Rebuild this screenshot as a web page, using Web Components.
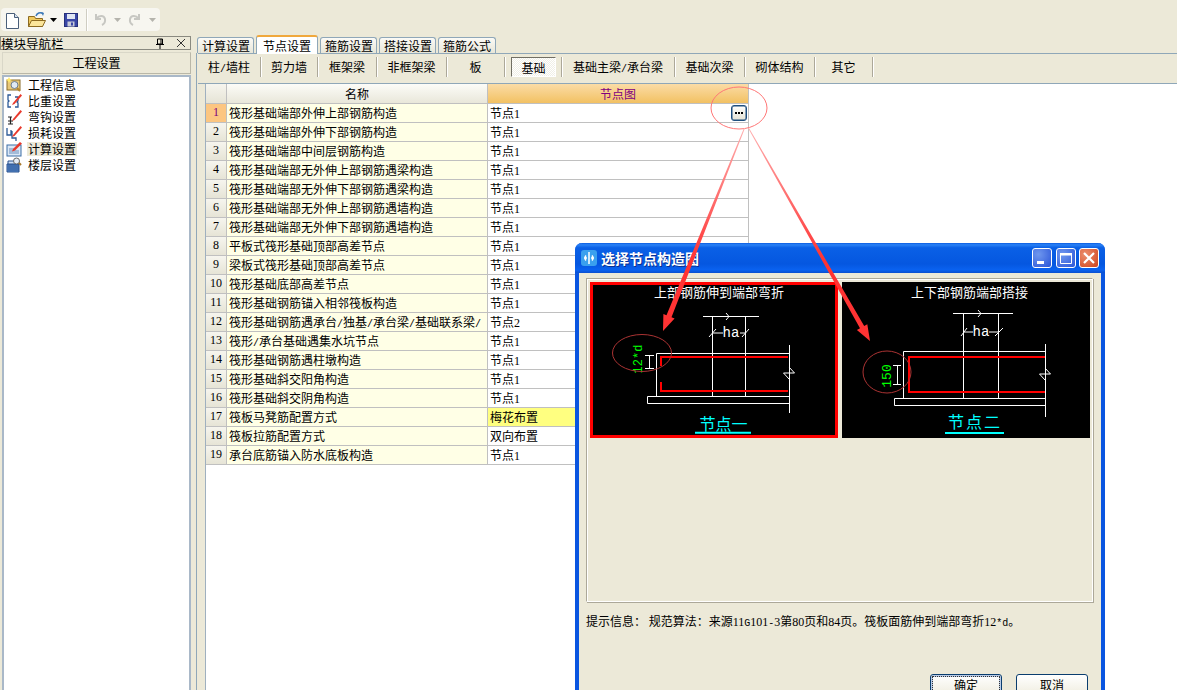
<!DOCTYPE html>
<html lang="zh"><head><meta charset="utf-8"><title>节点设置</title>
<style>
html,body{margin:0;height:690px;overflow:hidden;background:#ece9d8;font:12px "Noto Sans CJK SC",sans-serif;color:#000}
.app{height:690px;display:flex;flex-direction:column;position:relative;overflow:hidden}
.main{flex:1;display:flex;min-height:0}
</style></head><body>
<div class="app">
<gld-toolbar></gld-toolbar>
<div class="main"><gld-nav></gld-nav><gld-work></gld-work></div>
<gld-dialog></gld-dialog>
<gld-callouts></gld-callouts>
</div>
<script>
const asc=s=>s.replace(/[\x21-\x7e]+/g,m=>m.replace(/[0-9]+|[^0-9]+/g,p=>/^[0-9]/.test(p)?`<span style="font:12px/12px 'Liberation Serif',serif">${p}</span>`:`<span style="font:10px/12px 'Liberation Mono',monospace">${p}</span>`));
const def=(n,css,html)=>customElements.define(n,class extends HTMLElement{constructor(){super();const r=this.attachShadow({mode:'open'});r.innerHTML=`<style>${css}</style>`+(typeof html==='function'?html(this):html);}});

def('gld-toolbar',`:host{display:block;height:35px;box-sizing:border-box;padding:8px 0 4px 1px}
.bar{width:159px;height:23px;background:#f7f6f0;border-radius:4px;display:flex;align-items:center;padding-left:4px;box-sizing:border-box}
svg{display:block;flex:none}`,`<div class="bar">
<svg width="16" height="18" viewBox="0 0 16 18"><path d="M1.500 2.500h8l4 4v11h-12z" fill="#fff" stroke="#4a5f7a"/><path d="M9.500 2.500v4h4" fill="#d5e1f0" stroke="#4a5f7a"/></svg>
<svg width="18" height="17" viewBox="0 0 18 17" style="margin-left:7px"><path d="M.5 5.500h6l1 2h7v8H.5z" fill="#f0c95d" stroke="#8c6a20"/><path d="M.5 15.500l3-6h14l-3 6z" fill="#fbe59a" stroke="#8c6a20"/><path d="M8 5c1-3 4-4 7-2.500" fill="none" stroke="#3b78b8" stroke-width="1.500"/><path d="M13 1l3 1-1 3z" fill="#3b78b8"/></svg>
<svg width="7" height="4" viewBox="0 0 7 4" style="margin-left:4px"><path d="M0 0h7L3.500 4z"/></svg>
<svg width="14" height="14" viewBox="0 0 14 14" style="margin-left:7px"><rect x=".5" y=".5" width="13" height="13" fill="#3a47a6" stroke="#26307a"/><rect x="3" y="1" width="8" height="5" fill="#dfe5f2"/><rect x="3.500" y="8.500" width="7" height="5" fill="#c8cbd8"/><rect x="7" y="9.500" width="2" height="3" fill="#3a47a6"/></svg>
<div style="width:1px;height:22px;background:#cfcdc2;margin:0 6px 0 8px;box-shadow:1px 0 #fff"></div>
<svg width="14" height="15" viewBox="0 0 14 15"><path d="M3 2v5h5M3.500 6.500C6 3 11 3 12 7c.5 3-1 5-3 6" fill="none" stroke="#c7c7c2" stroke-width="2"/></svg>
<svg width="7" height="4" viewBox="0 0 7 4" style="margin-left:7px"><path d="M0 0h7L3.500 4z" fill="#b5b4ad"/></svg>
<svg width="14" height="15" viewBox="0 0 14 15" style="margin-left:7px"><path d="M11 2v5H6M10.500 6.500C8 3 3 3 2 7c-.5 3 1 5 3 6" fill="none" stroke="#c7c7c2" stroke-width="2"/></svg>
<svg width="7" height="4" viewBox="0 0 7 4" style="margin-left:7px"><path d="M0 0h7L3.500 4z" fill="#b5b4ad"/></svg>
</div>`);

const pencil=`<path d="M7 10l7.500-9 1.500 1.500-7.500 8.500-2.500 1z" fill="#e8392c"/>`;
const navIcons=[
`<rect x="1" y="3" width="13" height="10" fill="#e8c878" stroke="#8a6d2a"/><path d="M3 0l1 2 2 1-2 1-1 2-1-2-2-1 2-1z" fill="#ffe96a"/><circle cx="8.500" cy="8" r="3.500" fill="#dfe9f4" stroke="#6b7c90"/><path d="M11 11l3 3" stroke="#b8862e" stroke-width="2"/>`,
`<path d="M5 2H2v5l1 1-1 1v5h3M9 4h3v4l-1 1 1 1v4H9" fill="none" stroke="#2c5a96" stroke-width="1.300"/>`+pencil,
`<path d="M2 15h5M4.500 15V8M2 8h4M2 12h5" fill="none" stroke="#222" stroke-width="1.200"/>`+pencil,
`<path d="M1 3v7h4V5M6 6v7h4v3" fill="none" stroke="#2c5a96" stroke-width="1.300"/>`+pencil,
`<rect x="1" y="4" width="14" height="11" fill="#dbe8f6" stroke="#3d6ea5"/><path d="M3 8h5M3 10h10M3 12h10" stroke="#6c8fbb"/><path d="M7 8l7-7 2 1.500-7 7-3 1z" fill="#e8392c"/>`,
`<path d="M1 7h12v8H1z" fill="#5d8fd0" stroke="#29518e"/><path d="M2 4h11v3H2zM2 9h11M2 11h11M2 13h11" fill="#cfe0f4" stroke="#29518e"/><circle cx="10.500" cy="4" r="3" fill="#e6edf5" stroke="#6a6a6a"/><path d="M13 6l2 2" stroke="#a97a2d" stroke-width="2"/>`];
const navNames=['工程信息','比重设置','弯钩设置','损耗设置','计算设置','楼层设置'];
def('gld-nav',`:host{display:flex;flex-direction:column;width:191px;flex:none;padding-top:1px;box-sizing:border-box}
.head{height:14px;box-sizing:border-box;border:1px solid #8a8a80;display:flex;align-items:center;font-size:12.500px;line-height:13px;white-space:nowrap}
.head span{flex:1}.head svg{display:block}
.btn{margin:2px 0 1px 2px;height:22px;border:1px solid;border-color:#d9d7c8 #b9b7a8 #b9b7a8 #d9d7c8;box-sizing:border-box;text-align:center;line-height:20px;font-size:12px;background:#ece9d8}
.list{flex:1;margin:0 0 0 2px;border:2px solid #a9b8c8;border-bottom:0;background:#fff;padding:0 0 0 2px}
.it{height:16px;display:flex;align-items:center;white-space:nowrap;line-height:14px}
.it svg{flex:none;width:16px;height:16px;margin-right:5px}
.it span{padding:0 1px}.it.sel span{background:#ece9d8}`,
`<div class="head"><span>模块导航栏</span>
<svg width="10" height="11" viewBox="0 0 10 11" style="margin-right:12px"><path d="M2.500 1h5v5h-5zM1 6.500h8M5 7v4M6 1v5" fill="none" stroke="#000"/></svg>
<svg width="8" height="8" viewBox="0 0 8 8" style="margin-right:5px"><path d="M0 0l8 8M8 0L0 8" stroke="#333"/></svg></div>
<div class="btn">工程设置</div>
<div class="list">${navNames.map((n,i)=>`<div class="it${i==4?' sel':''}"><svg viewBox="0 0 16 16">${navIcons[i]}</svg><span>${n}</span></div>`).join('')}</div>`);

def('gld-tabs',`:host{display:flex;height:18px;align-items:flex-end;padding-left:1px;position:relative;z-index:1}
.t{height:16px;padding:0 4px;box-sizing:border-box;border:1px solid #8fa7b8;border-bottom:0;border-radius:3px 3px 0 0;margin-right:2px;background:linear-gradient(#fbfaf6,#e8e6d8);line-height:15px;white-space:nowrap;width:57px;text-align:center}
.t.on{height:19px;width:62px;background:#fff;border-top:2px solid #f0a83c;line-height:17px;margin-bottom:-1px;border-color:#f0a83c #8fa7b8 #fff;font-size:12px}`,
`<div class="t">计算设置</div><div class="t on">节点设置</div><div class="t">箍筋设置</div><div class="t">搭接设置</div><div class="t" style="width:58px">箍筋公式</div>`);

const subs=[['柱/墙柱',63],['剪力墙',57],['框架梁',59],['非框架梁',70],['板',58],['基础',57,1],['基础主梁/承台梁',113],['基础次梁',70],['砌体结构',70],['其它',58]];
def('gld-subbar',`:host{display:flex;height:31px;box-sizing:border-box;border-top:1px solid #8fa7b8;border-bottom:1px solid #8fa7b8;padding-top:3px;align-items:flex-start;margin-left:1px}
.s{height:20px;box-sizing:border-box;border-right:1px solid #aca899;box-shadow:1px 0 #fff;text-align:center;line-height:20px;flex:none;white-space:nowrap;position:relative}
.s b{font-weight:400;position:absolute;left:6px;right:5px;top:0;height:20px;line-height:20px;border:1px solid;box-sizing:border-box;border-color:#716f64 #fff #fff #716f64;background:repeating-conic-gradient(#f0efe6 0 25%,#fff 0 50%) 0 0/2px 2px}`,
subs.map(s=>`<div class="s" style="width:${s[1]}px">${s[2]?`<b>${s[0]}</b>`:asc(s[0])}</div>`).join(''));

const rows=[['筏形基础端部外伸上部钢筋构造','节点1'],['筏形基础端部外伸下部钢筋构造','节点1'],['筏形基础端部中间层钢筋构造','节点1'],['筏形基础端部无外伸上部钢筋遇梁构造','节点1'],['筏形基础端部无外伸下部钢筋遇梁构造','节点1'],['筏形基础端部无外伸上部钢筋遇墙构造','节点1'],['筏形基础端部无外伸下部钢筋遇墙构造','节点1'],['平板式筏形基础顶部高差节点','节点1'],['梁板式筏形基础顶部高差节点','节点1'],['筏形基础底部高差节点','节点1'],['筏形基础钢筋锚入相邻筏板构造','节点1'],['筏形基础钢筋遇承台/独基/承台梁/基础联系梁/','节点2'],['筏形/承台基础遇集水坑节点','节点1'],['筏形基础钢筋遇柱墩构造','节点1'],['筏形基础斜交阳角构造','节点1'],['筏形基础斜交阴角构造','节点1'],['筏板马凳筋配置方式','梅花布置'],['筏板拉筋配置方式','双向布置'],['承台底筋锚入防水底板构造','节点1']];
def('gld-grid',`:host{display:block;flex:1;margin-left:8px;background:#fff;border-left:1px solid #9fb0bf}
.r{display:grid;grid-template-columns:21px 261px 261px;width:543px;height:19px;box-sizing:border-box;border-bottom:1px solid #c0c0c0;line-height:18px;white-space:nowrap}
.r>div{box-sizing:border-box;overflow:hidden}
.n{background:linear-gradient(#f6f5ee,#e6e4d6);text-align:center;border-right:1px solid #c0c0c0;font:12px/17px 'Liberation Serif',serif}
.a{background:#ffffe6;border-right:1px solid #c0c0c0;padding-left:2px}
.b{border-right:1px solid #c0c0c0;padding-left:2px;position:relative}
.r.h{height:20px;line-height:19px;text-align:center}
.h .a{background:linear-gradient(#fcfcf8,#e9e7da);padding:0}
.h .b{background:linear-gradient(#fbdca6,#f2c163);color:#800080;padding:0}
.sel .n{background:#fcc681;color:#800080}
.y .b{background:#ffff80}
.dots{position:absolute;right:1px;top:1px;width:16px;height:16px;box-sizing:border-box;border:1px solid #1f4f7f;box-shadow:inset 0 0 0 .5px #1f4f7f;border-radius:3px;background:linear-gradient(#fff,#e5e3d5);display:flex;justify-content:center;align-items:center;gap:1px}
.dots i{width:2px;height:2px;background:#000}`,
`<div class="r h"><div class="n"></div><div class="a">名称</div><div class="b">节点图</div></div>`+
rows.map((r,i)=>`<div class="r${i==0?' sel':''}${i==16?' y':''}"><div class="n">${i+1}</div><div class="a">${asc(r[0])}</div><div class="b">${asc(r[1])}${i==0?'<span class="dots"><i></i><i></i><i></i></span>':''}</div></div>`).join(''));

def('gld-work',`:host{flex:1;display:flex;flex-direction:column;margin-left:5px;min-width:0;background:#ece9d8}
.body{flex:1;display:flex;flex-direction:column;min-height:0;border-left:1px solid #8fa7b8;background:#ece9d8}
.pane{flex:1;display:flex;background:#ece9d8;min-height:0}`,
`<gld-tabs></gld-tabs><div class="body"><gld-subbar></gld-subbar><div class="pane"><gld-grid></gld-grid></div></div>`);

const brk=(x,y)=>`<path d="M${x-5.5} ${y}H${x+5.500}L${x} ${y-6}M${x-5.500} ${y}L${x} ${y+6}" fill="none" stroke="#fff"/>`;
const drawings={
one:`<g fill="none" stroke="#fff">
<path d="M703 316.500h56M712.500 316.500V396M745.500 316.500V396M656.500 396V353.500H789M647.500 396.500h142v7h-142zM789.500 345V413"/>
<path d="M726 313l3 3.500-3 3.500M713 333h10M740 333h6M709 337l7-8M742 337l7-8M645 355.500h9M645 368.500h9M649.500 356v12"/>
</g>${brk(789,373)}
<path d="M661 366V357H788M661 382v9H788" fill="none" stroke="#f00" stroke-width="2"/>
<text x="719" y="297" class="t">上部钢筋伸到端部弯折</text>
<text x="731" y="337" class="t" style="font:14px 'Liberation Mono',monospace">ha</text>
<text transform="translate(642,359) rotate(-90)" class="g" text-anchor="middle" style="font-size:12px">12*d</text>
<ellipse cx="642" cy="353" rx="29.500" ry="18.500" fill="none" stroke="#a33"/>
<text x="723.500" y="430" class="c">节点一</text><path d="M695 432.800h56" stroke="#0ff" stroke-width="2"/>`,
two:`<g fill="none" stroke="#fff">
<path d="M953 313.500h60M963.500 313.500V398M998.500 313.500V398M903.500 398V351.500H1045M894.500 398.500h151v7h-151zM1045.500 344V417"/>
<path d="M978 310l3 3.500-3 3.500M964 332h9M989 332h9M961 336l6-8M995 336l8-8M893 365.500h8M893 384.500h8M897.500 366v18"/>
</g>${brk(1045,374)}
<path d="M1045 357H909V392H1045" fill="none" stroke="#f00" stroke-width="2"/>
<text x="969.500" y="297" class="t">上下部钢筋端部搭接</text>
<text x="981" y="336" class="t" style="font:14px 'Liberation Mono',monospace">ha</text>
<text transform="translate(891,376) rotate(-90)" class="g" text-anchor="middle" style="font-size:13px">150</text>
<ellipse cx="887" cy="372" rx="24" ry="21" fill="none" stroke="#a33"/>
<text x="975" y="428" class="c" style="letter-spacing:2px">节点二</text><path d="M945 433h59" stroke="#0ff" stroke-width="2"/>`};
def('gld-node',`:host{display:block;width:248px;height:156px;background:#000;box-sizing:border-box;flex:none}
:host([active]){outline:3px solid #f00;outline-offset:-3px}
svg{display:block;width:100%;height:100%}
.t{fill:#fff;font:13px "Noto Sans CJK SC",sans-serif;text-anchor:middle}
.g{fill:#0f0;font:14px "Liberation Mono",monospace}
.c{fill:#0ff;font:16px "Noto Sans CJK SC",sans-serif;text-anchor:middle}`,
h=>{const k=h.getAttribute('kind');const vb=k=='one'?'590 282 248 156':'842 282 248 156';return `<svg viewBox="${vb}">${drawings[k]}</svg>`});

def('gld-button',`:host{display:block;width:72px;height:26px;box-sizing:border-box;border:1px solid #0a3d6e;border-radius:3px;background:linear-gradient(#fff,#ece9d8);text-align:center;line-height:20px}
:host([def]){box-shadow:inset 0 0 0 2px #b9cbe6;outline:1px dotted #333;outline-offset:-3px}`,`<slot></slot>`);

def('gld-dialog',`:host{position:absolute;left:575px;top:243px;width:530px;height:460px;box-sizing:border-box;background:#ece9d8;border:solid #0a55e0;border-width:0 4px;border-radius:7px 7px 0 0;display:flex;flex-direction:column}
.tb{height:30px;margin:0 -4px;flex:none;border-radius:7px 7px 0 0;background:linear-gradient(#0a5be0 0,#2a82f6 6%,#0a60e6 16%,#0557e0 70%,#0a62f0 90%,#0a4fd0 100%);display:flex;align-items:center;color:#fff;font-weight:700;font-size:14px;padding:0 6px 0 6px;box-sizing:border-box;text-shadow:1px 1px #0a2f90;white-space:nowrap}
.ic{width:16px;height:16px;margin-right:4px;flex:none;display:block}
.tt{flex:1}
.wb{width:20px;height:20px;margin-left:4px;flex:none;box-sizing:border-box;border:1px solid #fff;border-radius:3px;background:radial-gradient(circle at 30% 30%,#6f97ee,#2a55d8);position:relative}
.wb:last-child{background:radial-gradient(circle at 30% 30%,#ec8f6f,#d0431c);margin-left:3px}
.wb svg{position:absolute;inset:0;width:18px;height:18px}
.well{margin:5px 7px 0 7px;height:324px;flex:none;box-sizing:border-box;border:1px solid;border-color:#aca899 #fff #fff #aca899;box-shadow:inset 1px 1px 0 #fff,1px 1px 0 #aca899;padding:3px 3px 0 3px;display:flex;gap:4px;width:507px}
.info{margin:12px 0 0 7px;line-height:14px;white-space:nowrap;height:60px}
.btns{display:flex;justify-content:flex-end;gap:14px;padding-right:13px}`,
`<div class="tb"><svg class="ic" viewBox="0 0 16 16"><rect width="16" height="16" rx="3" fill="#3aa0ee"/><path d="M8 2v12M3 8h3M10 8h3M5 5.500a4 4 0 0 0 0 5M11 5.500a4 4 0 0 1 0 5" fill="none" stroke="#fff" stroke-width="1.500"/></svg><span class="tt">选择节点构造图</span>
<div class="wb"><svg viewBox="0 0 18 18"><rect x="4" y="12" width="7" height="3" fill="#fff"/></svg></div>
<div class="wb"><svg viewBox="0 0 18 18"><path d="M3.500 4.500h11v10h-11z" fill="none" stroke="#fff"/><rect x="3" y="4" width="12" height="2.500" fill="#fff"/></svg></div>
<div class="wb"><svg viewBox="0 0 18 18"><path d="M4 4l10 10M14 4L4 14" stroke="#fff" stroke-width="2.200"/></svg></div></div>
<div class="well"><gld-node kind="one" active></gld-node><gld-node kind="two"></gld-node></div>
<div class="info">${asc('提示信息： 规范算法：来源11G101-3第80页和84页。筏板面筋伸到端部弯折12*d。')}</div>
<div class="btns"><gld-button def>确定</gld-button><gld-button>取消</gld-button></div>`);

def('gld-callouts',`:host{position:absolute;inset:0;pointer-events:none}svg{display:block;width:100%;height:100%}`,
`<svg viewBox="0 0 1177 690">
<defs><linearGradient id="ar" gradientUnits="userSpaceOnUse" x1="0" y1="128" x2="0" y2="260"><stop offset="0" stop-color="#ffb0b0"/><stop offset="1" stop-color="#f33"/></linearGradient></defs>
<ellipse cx="739" cy="108" rx="28" ry="21" fill="none" stroke="#f77"/>
<path d="M745 128L671.500 317.200L674.600 318.500L663 331L663.400 314L666.500 315.300L744 128z" fill="url(#ar)"/>
<path d="M749 128L864.200 325.900L867.300 324.200L870 341L856.900 330L860 328.300L748 128z" fill="url(#ar)"/>
</svg>`);
</script>
</body></html>
